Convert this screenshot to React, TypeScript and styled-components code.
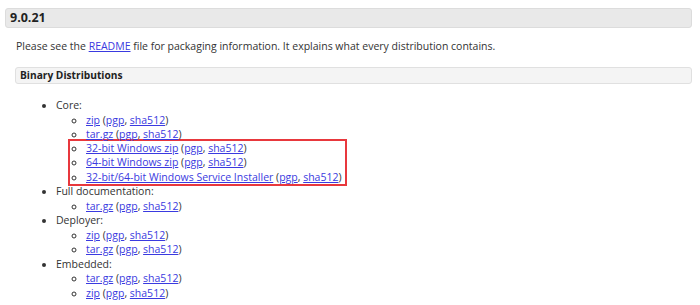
import React from "react";
import styled, { createGlobalStyle } from "styled-components";

const GlobalStyle = createGlobalStyle`
  html, body {
    margin: 0;
    padding: 0;
    background: #fff;
  }
  body {
    font-family: "Open Sans", "Liberation Sans", sans-serif;
    font-size: 10.5px;
    color: #333;
  }
`;

type Sub = { label: string };
type Group = { title: string; items: Sub[]; highlight?: number[] };

const groups: Group[] = [
  {
    title: "Core:",
    items: [
      { label: "zip" },
      { label: "tar.gz" },
      { label: "32-bit Windows zip" },
      { label: "64-bit Windows zip" },
      { label: "32-bit/64-bit Windows Service Installer" },
    ],
    highlight: [2, 3, 4],
  },
  { title: "Full documentation:", items: [{ label: "tar.gz" }] },
  { title: "Deployer:", items: [{ label: "zip" }, { label: "tar.gz" }] },
  { title: "Embedded:", items: [{ label: "tar.gz" }, { label: "zip" }] },
];

const DistItem: React.FC<{ item: Sub }> = ({ item }) => (
  <SubItem>
    <Link href="#">{item.label}</Link> (<Link href="#">pgp</Link>, <Link href="#">sha512</Link>)
  </SubItem>
);

export default function App() {
  return (
    <Page>
      <GlobalStyle />
      <VersionBar>9.0.21</VersionBar>
      <Section>
        <Intro>
          Please see the <Link href="#">README</Link> file for packaging information. It explains what every distribution contains.
        </Intro>
        <SubBar>Binary Distributions</SubBar>
        <TopList>
          {groups.map((g) => {
            const hl = g.highlight || [];
            const plain = g.items.filter((_, i) => !hl.includes(i));
            const marked = g.items.filter((_, i) => hl.includes(i));
            return (
              <TopItem key={g.title}>
                {g.title}
                <SubList>
                  {plain.map((it, i) => (
                    <DistItem key={i} item={it} />
                  ))}
                </SubList>
                {marked.length > 0 && (
                  <Highlight>
                    <SubList $inset={16}>
                      {marked.map((it, i) => (
                        <DistItem key={i} item={it} />
                      ))}
                    </SubList>
                  </Highlight>
                )}
              </TopItem>
            );
          })}
        </TopList>
      </Section>
    </Page>
  );
}

const Page = styled.div`
  width: 700px;
  height: 305px;
  overflow: hidden;
  padding: 8px 8px 0 5px;
  box-sizing: border-box;
`;

const VersionBar = styled.h3`
  margin: 0;
  height: 20px;
  box-sizing: border-box;
  padding: 0 4px;
  background: #e9e9e9;
  border: 1px solid #dcdcdc;
  border-radius: 3px;
  font-size: 12.5px;
  font-weight: 700;
  line-height: 18px;
  color: #222;
`;

const Section = styled.div`
  padding-left: 10px;
`;

const Intro = styled.p`
  margin: 10px 0 0 1px;
  line-height: 17px;
`;

const SubBar = styled.h4`
  margin: 12px 0 0;
  height: 17px;
  box-sizing: border-box;
  padding: 0 4px;
  background: #f4f4f4;
  border: 1px solid #e0e0e0;
  border-radius: 3px;
  font-size: 10.2px;
  font-weight: 700;
  line-height: 15px;
  color: #222;
`;

const TopList = styled.ul`
  margin: 14px 0 0;
  padding-left: 41px;
  list-style: disc;
  line-height: 14.5px;
`;

const TopItem = styled.li``;

const SubList = styled.ul<{ $inset?: number }>`
  margin: 0;
  padding-left: ${(p) => p.$inset ?? 30}px;
  list-style: circle;
  white-space: nowrap;
`;

const SubItem = styled.li``;

const Highlight = styled.div`
  width: 279px;
  margin: -3px 0 -2px 12px;
  box-sizing: border-box;
  border: 2px solid #e8383d;
`;

const Link = styled.a`
  color: #3a3ae0;
  text-decoration: underline;
`;
